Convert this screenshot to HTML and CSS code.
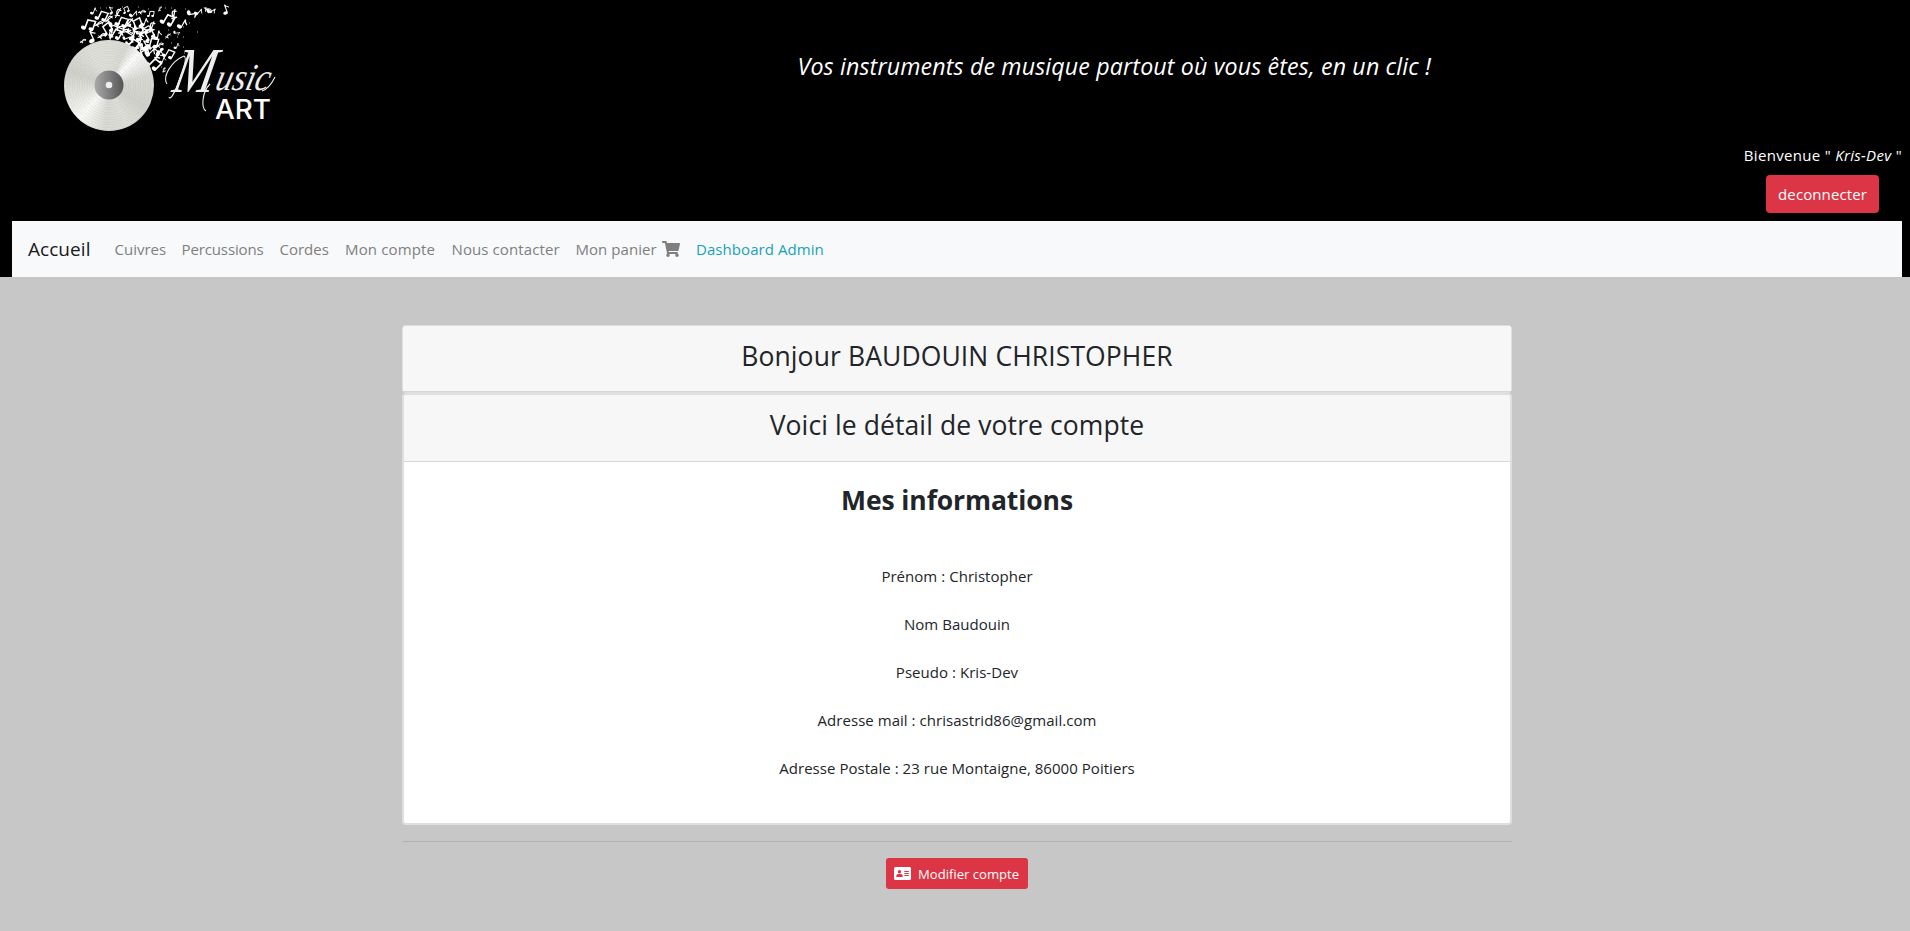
FILE: index.html
```html
<!DOCTYPE html>
<html lang="fr">
<head>
<meta charset="utf-8">
<title>Music Art - Mon compte</title>
<link rel="stylesheet" href="styles.css">
</head>
<body>
<header class="site-header">
  <div class="banner">
    <svg class="logo" viewBox="50 0 240 140" width="240" height="140" role="img" aria-label="Music Art">
      <defs>
        <linearGradient id="label"><stop offset="0" stop-color="#aaa"/><stop offset="1" stop-color="#555"/></linearGradient>
        <g id="a"><ellipse cx="-2" cy="4" rx="2.6" ry="1.900"/><path d="M0 4V-5Q1-2 4-1" fill="none" stroke="#fff" stroke-width="1.2"/></g>
        <g id="b"><ellipse cx="-4" cy="4" rx="2.3" ry="1.700"/><ellipse cx="3" cy="3" rx="2.3" ry="1.700"/><path d="M-2.5 4V-4L4.5-5V3" fill="none" stroke="#fff" stroke-width="1.500"/></g>
        <g id="c"><path d="M2-4Q-3-5-2-1T2 2T-2 4M0-6V6" fill="none" stroke="#fff" stroke-width="1.300"/></g>
      </defs>
      <g class="notes">
        <use href="#a" transform="translate(94 11) rotate(20) scale(.7)"/><use href="#b" transform="translate(102 16) rotate(25)"/>
        <use href="#b" transform="translate(89 25) rotate(20) scale(1.1)"/><use href="#a" transform="translate(92 36) rotate(-25) scale(1.1)"/>
        <use href="#c" transform="translate(83 41) rotate(60) scale(.6)"/><use href="#c" transform="translate(99 24) rotate(70) scale(.8)"/>
        <use href="#a" transform="translate(111 10) rotate(-30) scale(.7)"/><use href="#c" transform="translate(118 13) rotate(30) scale(.9)"/>
        <use href="#b" transform="translate(126 10) rotate(-20) scale(.6)"/><use href="#a" transform="translate(134 14) rotate(40) scale(.8)"/>
        <use href="#c" transform="translate(142 12) rotate(80) scale(.7)"/><use href="#b" transform="translate(151 14) rotate(10) scale(.6)"/>
        <use href="#c" transform="translate(160 9) rotate(30) scale(.5)"/><use href="#b" transform="translate(168 20) rotate(30) scale(1.1)"/>
        <use href="#c" transform="translate(174 15) rotate(10)"/><use href="#a" transform="translate(183 24) rotate(30)"/>
        <use href="#a" transform="translate(193 14) rotate(80)"/><use href="#a" transform="translate(199 12) rotate(40) scale(.8)"/>
        <use href="#c" transform="translate(208 10) rotate(120) scale(.8)"/><use href="#a" transform="translate(212 11) rotate(60) scale(.8)"/>
        <use href="#a" transform="translate(226 9) rotate(-20) scale(.9)"/><use href="#b" transform="translate(107 29) rotate(-30)"/>
        <use href="#a" transform="translate(115 25) rotate(70)"/><use href="#b" transform="translate(122 22) rotate(25)"/>
        <use href="#c" transform="translate(129 23) rotate(40)"/><use href="#b" transform="translate(137 24) rotate(-20)"/>
        <use href="#a" transform="translate(145 22) rotate(20) scale(.8)"/><use href="#c" transform="translate(152 27) rotate(20)"/>
        <use href="#b" transform="translate(116 34) rotate(30)"/><use href="#c" transform="translate(124 32) rotate(80)"/>
        <use href="#a" transform="translate(130 34) rotate(-60)"/><use href="#b" transform="translate(136 36) rotate(15)"/>
        <use href="#c" transform="translate(143 33) rotate(50)"/><use href="#b" transform="translate(149 35) rotate(-30)"/>
        <use href="#a" transform="translate(158 35) rotate(10) scale(.9)"/><use href="#c" transform="translate(168 36) rotate(50) scale(.6)"/>
        <use href="#a" transform="translate(177 33) rotate(80) scale(.6)"/><use href="#b" transform="translate(133 44) rotate(40)"/>
        <use href="#c" transform="translate(140 43) rotate(15)"/><use href="#a" transform="translate(146 45) rotate(-30)"/>
        <use href="#b" transform="translate(153 43) rotate(15)"/><use href="#c" transform="translate(160 45) rotate(70) scale(.7)"/>
        <use href="#b" transform="translate(144 53) rotate(-20)"/><use href="#a" transform="translate(151 52) rotate(45)"/>
        <use href="#c" transform="translate(158 55) rotate(30)"/><use href="#b" transform="translate(169 54) rotate(30) scale(.9)"/>
        <use href="#a" transform="translate(177 46) rotate(20) scale(.6)"/><use href="#b" transform="translate(154 64) rotate(45) scale(1.1)"/>
        <use href="#a" transform="translate(163 60) rotate(20) scale(.7)"/><use href="#c" transform="translate(164 70) rotate(20) scale(.5)"/>
        <use href="#c" transform="translate(102 36) rotate(70) scale(.8)"/><use href="#c" transform="translate(111 35) rotate(10) scale(.8)"/>
        <use href="#b" transform="translate(128 40) rotate(70) scale(.8)"/><use href="#b" transform="translate(147 29) rotate(60) scale(.8)"/>
        <use href="#c" transform="translate(109 19) rotate(50) scale(.8)"/><use href="#c" transform="translate(146 48) rotate(90)"/>
        <use href="#b" transform="translate(139 30) rotate(80) scale(.8)"/><use href="#a" transform="translate(156 50) rotate(-50)"/>
        <use href="#b" transform="translate(131 29) rotate(120) scale(.7)"/><use href="#c" transform="translate(120 28) rotate(110)"/>
        <use href="#b" transform="translate(140 49) rotate(150) scale(.8)"/><use href="#a" transform="translate(162 53) rotate(150) scale(.8)"/>
        <path class="specks" d="M165 8h1m5 0h1m13 1h1m-18 21h1m8 7h1m5-10h1m5-4h1m7 9h1m-15 5h1m-7 9h1m5 1h1m4 4h1m-18-8h1m12 10h1m-24 14h1m3 4h1M100 8h1m5 0h1m15-1h1m4 0h1m10 0h1m9 2h1"/>
      </g>
      <foreignObject x="64" y="40" width="90" height="91"><div class="disc"></div></foreignObject>
      <circle cx="109" cy="85" r="14.5" fill="url(#label)"/><circle cx="109" cy="85" r="3.3" fill="#eee"/>
      <path class="flourish" d="M184 56C172 61 162 76 167 84M184 56Q188 58 180 78C175 93 170 101 169 97M210 84C202 92 201 108 206 111M262 91Q269 89 275 77"/>
      <g transform="translate(171 92) skewX(-12)"><text class="script-cap" x="0" y="0" textLength="41" lengthAdjust="spacingAndGlyphs">M</text></g>
      <g transform="translate(214 90) skewX(-14)"><text class="script" x="0" y="0" textLength="54" lengthAdjust="spacingAndGlyphs">usic</text></g>
      <text class="art" x="215" y="119" textLength="56" lengthAdjust="spacingAndGlyphs">ART</text>
    </svg>
    <p class="slogan">Vos instruments de musique partout où vous êtes, en un clic !</p>
  </div>
  <div class="session">
    <p class="welcome">Bienvenue " <em>Kris-Dev</em> "</p>
    <button class="btn logout">deconnecter</button>
  </div>
  <nav class="navbar">
    <a class="brand">Accueil</a>
    <a class="link n1">Cuivres</a>
    <a class="link n2">Percussions</a>
    <a class="link n3">Cordes</a>
    <a class="link n4">Mon compte</a>
    <a class="link n5">Nous contacter</a>
    <a class="link n6"><span>Mon panier</span>
      <svg class="cart" viewBox="0 0 576 512" width="18" height="16"><path fill="currentColor" d="M528.1 301.3l47.3-208C578.800 78.300 567.400 64 552 64H159.200l-9.200-44.800C147.800 8 137.900 0 126.500 0H24C10.700 0 0 10.700 0 24v16c0 13.300 10.700 24 24 24h69.900l70.200 343.400C147.300 417.100 136 435.200 136 456c0 30.900 25.100 56 56 56s56-25.100 56-56c0-15.700-6.400-29.800-16.800-40h209.600C430.400 426.200 424 440.300 424 456c0 30.900 25.100 56 56 56s56-25.100 56-56c0-22.200-12.900-41.300-31.600-50.400l5.500-24.300c3.400-15-8-29.300-23.400-29.300H218.100l-6.500-32h293.100c11.200 0 20.900-7.800 23.400-18.700z"/></svg></a>
    <a class="link n7 admin">Dashboard Admin</a>
  </nav>
</header>
<main class="account">
  <section class="card greeting"><h2 class="card-header h1a">Bonjour BAUDOUIN CHRISTOPHER</h2></section>
  <section class="card details">
    <h2 class="card-header h1b">Voici le détail de votre compte</h2>
    <div class="card-body">
      <h3 class="card-title">Mes informations</h3>
      <p class="d1">Prénom : Christopher</p>
      <p class="d2">Nom Baudouin</p>
      <p class="d3">Pseudo : Kris-Dev</p>
      <p class="d4">Adresse mail : chrisastrid86@gmail.com</p>
      <p class="d5">Adresse Postale : 23 rue Montaigne, 86000 Poitiers</p>
    </div>
  </section>
  <hr class="rule">
  <button class="btn edit"><svg viewBox="0 0 17 13" width="17" height="13"><rect width="17" height="13" rx="1.5" fill="#fff"/><circle cx="5.500" cy="4.700" r="1.700" fill="#dc3545"/><path d="M2.300 10V9q0-1.900 1.800-1.900h2.800q1.800 0 1.800 1.900v1zM10.300 4h4.500v1h-4.500zM10.300 6h4.500v1h-4.500zM10.300 8h4.500v1h-4.500z" fill="#dc3545"/></svg><span>Modifier compte</span></button>
</main>
</body>
</html>
```
FILE: styles.css
```css
* { box-sizing: border-box; }
body { margin: 0; min-height: 931px; background: #c7c7c7; color: #212529; font: 15px/24px "Open Sans", "Noto Sans", sans-serif; }
p, h2, h3 { margin: 0; white-space: nowrap; }
.site-header { height: 277px; padding: 0 8px 0 12px; background: #000; color: #fff; display: flex; flex-direction: column; }
.banner { height: 140px; display: flex; }
.logo { margin-left: 38px; flex: none; }
.notes { fill: #fff; }
.specks { stroke: #aaa; stroke-width: 1; fill: none; }
.disc { width: 90px; height: 91px; border-radius: 50%; background: repeating-radial-gradient(circle, transparent 0 1.5px, rgba(90,90,70,.05) 1.5px 2.5px), conic-gradient(#deded9, #d8d8d3 25deg, #fafafa 42deg, #d8d9d4 75deg, #d0d1cb 120deg, #deded9 155deg, #d8d9d3 185deg, #f8f8f6 222deg, #e4e5e0 250deg, #d0d1cb 290deg, #deded9 330deg, #deded9); }
.flourish { fill: none; stroke: #eee; stroke-width: 1.1; }
.script-cap { font: italic 64px "Liberation Serif", serif; fill: #eee; }
.script { font: italic 38px "Liberation Serif", serif; fill: #eee; }
.art { font: 500 26.500px Inter, sans-serif; fill: #fff; }
.slogan { margin: 48px 0 0 507.500px; font-size: 23.200px; letter-spacing: .15px; line-height: 36px; font-style: italic; }
.session { height: 81px; display: flex; flex-direction: column; align-items: flex-end; padding-top: 3px; }
.welcome { line-height: 24px; margin-bottom: 8px; letter-spacing: .32px; }
.btn { border: 0; border-radius: 4px; background: #dc3545; color: #fff; font: 15px/24px "Open Sans", sans-serif; padding: 0; white-space: nowrap; }
.logout { width: 113px; height: 38px; margin-right: 23px; letter-spacing: .1px; }
.navbar { height: 56px; background: #f8f9fa; display: flex; align-items: center; padding-left: 16px; color: #7f7f7f; white-space: nowrap; }
.brand { width: 86.500px; color: #1a1a1a; font-size: 19px; letter-spacing: .05px; line-height: 30px; }
.n1 { width: 67px; }
.n2 { width: 98px; letter-spacing: -.12px; }
.n3 { width: 65.500px; }
.n4 { width: 106.500px; letter-spacing: .15px; }
.n5 { width: 124px; letter-spacing: .1px; }
.n6 { width: 120.500px; display: flex; align-items: center; letter-spacing: .05px; }
.n6 span { width: 86px; }
.admin { color: #17a2b8; letter-spacing: .06px; }
.account { width: 1110px; margin: 48px 0 0 402px; display: flex; flex-direction: column; align-items: center; text-align: center; }
.card { width: 100%; background: #fff; border: 1px solid #dfdfdf; border-radius: 4px; }
.greeting { height: 68px; border-bottom-width: 1px; }
.card-header { height: 66px; padding-top: 13px; background: #f7f7f7; border-bottom: 1px solid #d7d7d7; border-radius: 3px 3px 0 0; font-size: 26.500px; line-height: 34px; font-weight: 400; letter-spacing: .1px; }
.details { height: 432px; border-width: 2px; }
.details .card-header { height: 67px; }
.card-body { display: flex; flex-direction: column; align-items: center; gap: 24px; padding-top: 21px; letter-spacing: .04px; }
.card-title { font-size: 26.500px; line-height: 34px; margin-bottom: 23px; letter-spacing: -.1px; }
.rule { width: 100%; height: 1px; border: 0; margin: 16px 0; background: #b2b2b2; }
.edit { width: 142px; height: 31px; font-size: 13.100px; border-radius: 3px; display: flex; align-items: center; gap: 7px; padding-left: 8px; }
```
